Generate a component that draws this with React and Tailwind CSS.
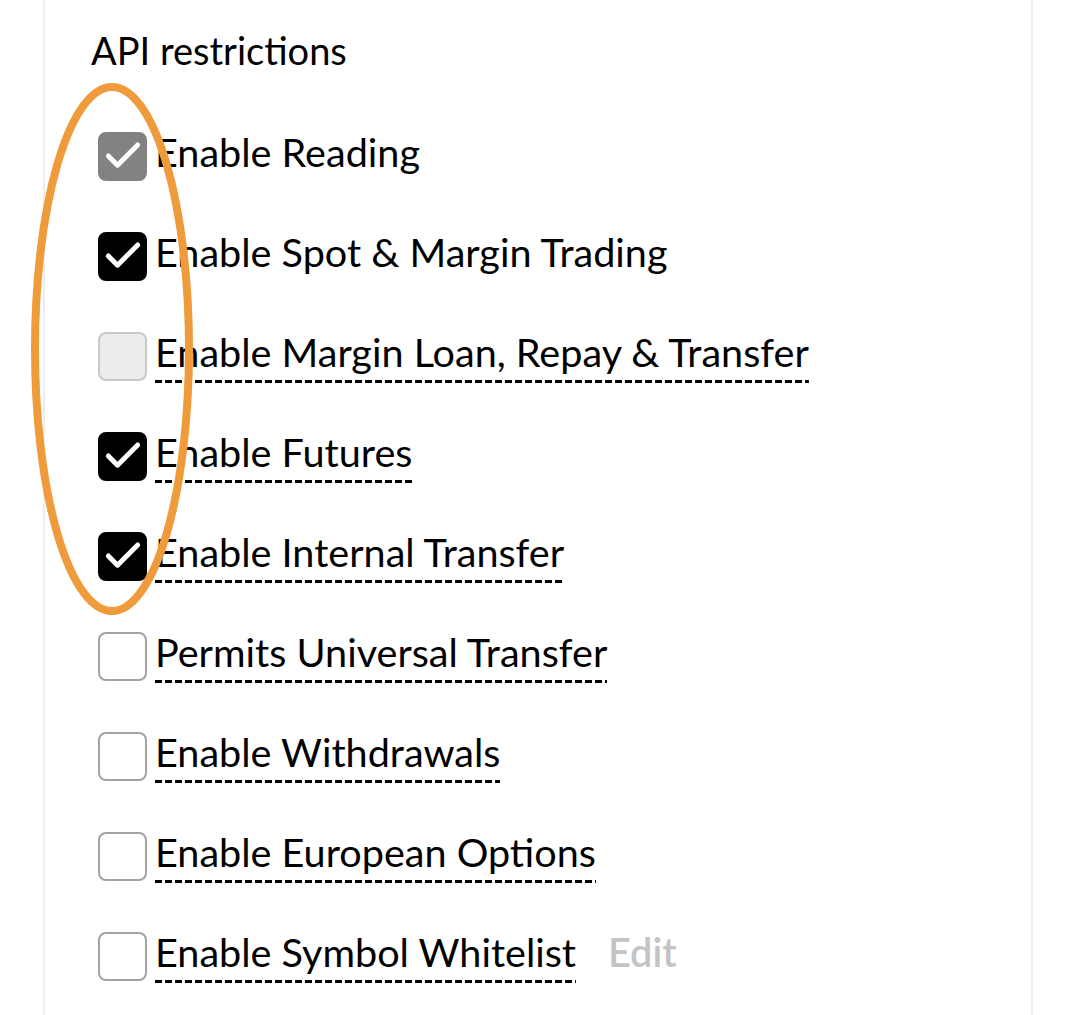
import { Check } from "lucide-react";

const permissions = [
  { label: "Enable Reading", state: "locked", dashed: false },
  { label: "Enable Spot & Margin Trading", state: "checked", dashed: false },
  { label: "Enable Margin Loan, Repay & Transfer", state: "disabled", dashed: true },
  { label: "Enable Futures", state: "checked", dashed: true },
  { label: "Enable Internal Transfer", state: "checked", dashed: true },
  { label: "Permits Universal Transfer", state: "empty", dashed: true },
  { label: "Enable Withdrawals", state: "empty", dashed: true },
  { label: "Enable European Options", state: "empty", dashed: true },
  { label: "Enable Symbol Whitelist", state: "empty", dashed: true, edit: true },
];

function Box({ state }) {
  const styles = {
    locked: "bg-[#828282] border-[#828282]",
    checked: "bg-black border-black",
    disabled: "bg-[#ececec] border-[#c9c9c9]",
    empty: "bg-white border-[#a3a3a3]",
  };
  const ticked = state === "locked" || state === "checked";
  return (
    <div
      className={`w-[49px] h-[49px] shrink-0 rounded-[8px] border-2 flex items-center justify-center ${styles[state]}`}
    >
      {ticked && <Check className="text-white" size={44} strokeWidth={2.7} />}
    </div>
  );
}

export default function App() {
  return (
    <div className="relative w-full h-[1015px] bg-white overflow-hidden font-['Lato',sans-serif] text-black">
      <div className="ml-[43px] w-[990px] h-full border-x-2 border-[#ededed] pl-[53px]">
        {/* Header */}
        <h2 className="-ml-[7px] pt-[28px] h-[106px] text-[38px] leading-[44px]">API restrictions</h2>

        {/* Permission list */}
        <div className="flex flex-col">
          {permissions.map((p) => (
            <div key={p.label} className="h-[100px] flex items-center gap-[8px]">
              <Box state={p.state} />
              <div className="flex flex-col pt-[1px]">
                <span className="text-[39.6px] leading-[44px]">{p.label}</span>
                <div
                  className={`h-[3px] mt-[6px] ${
                    p.dashed
                      ? "bg-[repeating-linear-gradient(to_right,#000_0px,#000_7px,transparent_7px,transparent_10px)]"
                      : ""
                  }`}
                />
              </div>
              {p.edit && (
                <span className="ml-[24px] pt-[2px] pb-[10px] text-[39.6px] leading-[44px] font-semibold text-[#c3c3c3]">
                  Edit
                </span>
              )}
            </div>
          ))}
        </div>
      </div>

      {/* Highlight annotation */}
      <svg className="absolute left-0 top-0 pointer-events-none" width="260" height="640">
        <ellipse cx="112" cy="349" rx="77" ry="262" fill="none" stroke="#f09b3b" strokeWidth="8" />
      </svg>
    </div>
  );
}
